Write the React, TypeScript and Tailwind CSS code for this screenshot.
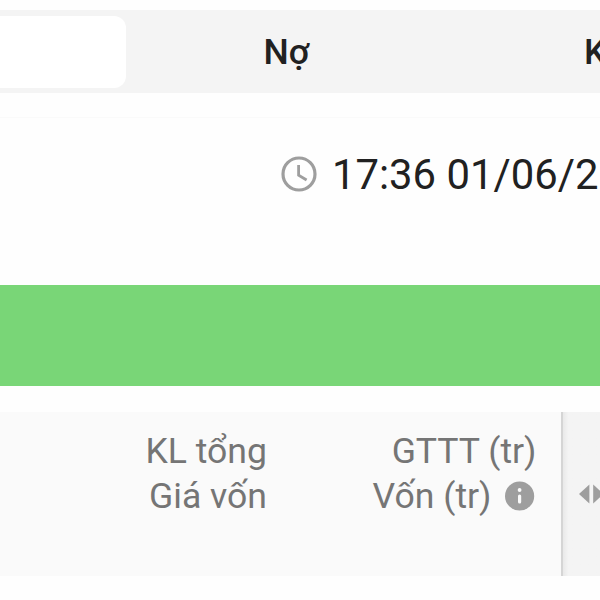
const ClockIcon = () => (
    <svg className="-mt-[2px] h-9 w-9 shrink-0" viewBox="0 0 36 36" fill="none" stroke="#9e9e9e">
        <circle cx="18" cy="18" r="16" strokeWidth="3.2" />
        <path d="M17.6 9v10.2l8 4.8" strokeWidth="2.8" />
    </svg>
);

const InfoIcon = () => (
    <svg className="-mt-[2px] h-[30px] w-[30px] shrink-0" viewBox="0 0 30 30">
        <circle cx="14.6" cy="15" r="14.6" fill="#9e9e9e" />
        <circle cx="14.6" cy="9" r="1.9" fill="#fafafa" />
        <path d="M14.6 15v6" stroke="#fafafa" strokeWidth="3.2" strokeLinecap="round" />
    </svg>
);

// Pair of arrows that marks the draggable column edge
const ResizeIcon = () => (
    <svg className="h-[20px] w-[24px] shrink-0" viewBox="0 0 24 20" fill="#9e9e9e">
        <path d="M10.4 0.5v19L0 10z" />
        <path d="M14.2 0.5v19L24.6 10z" />
    </svg>
);

const Tabs = () => (
    <div className="mt-[10px] flex h-[83px] w-full items-center bg-[#f4f4f4] text-[35.6px] font-medium text-[#212121]">
        <div className="h-[72px] w-[126px] shrink-0 rounded-r-xl bg-white" />
        <div className="w-[321px] shrink-0 pt-[2px] text-center">Nợ</div>
        <div className="ml-[137px] shrink-0 pt-[2px]">Ký quỹ</div>
    </div>
);

const TableHeader = () => (
    <div className="mt-[26px] flex h-[164px] w-full bg-[#fafafa] text-right text-[35.6px] leading-[45px] text-[#757575]">
        <div className="w-[267px] shrink-0 pt-[17px]">
            <div>KL tổng</div>
            <div>Giá vốn</div>
        </div>
        <div className="w-[269.5px] shrink-0 pt-[17px]">
            <div>GTTT (tr)</div>
            <div className="flex items-center justify-end gap-[13px] pr-[2px]">
                <span>Vốn (tr)</span>
                <InfoIcon />
            </div>
        </div>
        <div className="ml-[24.5px] flex w-[39px] shrink-0 items-center border-l-2 border-[#d5d5d5] bg-linear-to-r from-[#e9e9e9] to-[#f4f4f4] to-15% pl-4">
            <ResizeIcon />
        </div>
    </div>
);

const App = () => (
    <div className="flex h-[600px] w-[600px] flex-col overflow-hidden bg-[#fefefe] font-[Roboto,sans-serif] whitespace-nowrap">
        <Tabs />
        <div className="mt-[24px] h-px w-full bg-[#fafafa]" />
        <div className="flex h-[114px] w-full items-center gap-[15px] pl-[281px] text-[41.8px] leading-none text-[#212121]">
            <ClockIcon />
            <span>17:36 01/06/2021</span>
        </div>
        <div className="mt-[53px] h-[101px] w-full shrink-0 bg-[#79d677]" />
        <TableHeader />
    </div>
);

export default App;
